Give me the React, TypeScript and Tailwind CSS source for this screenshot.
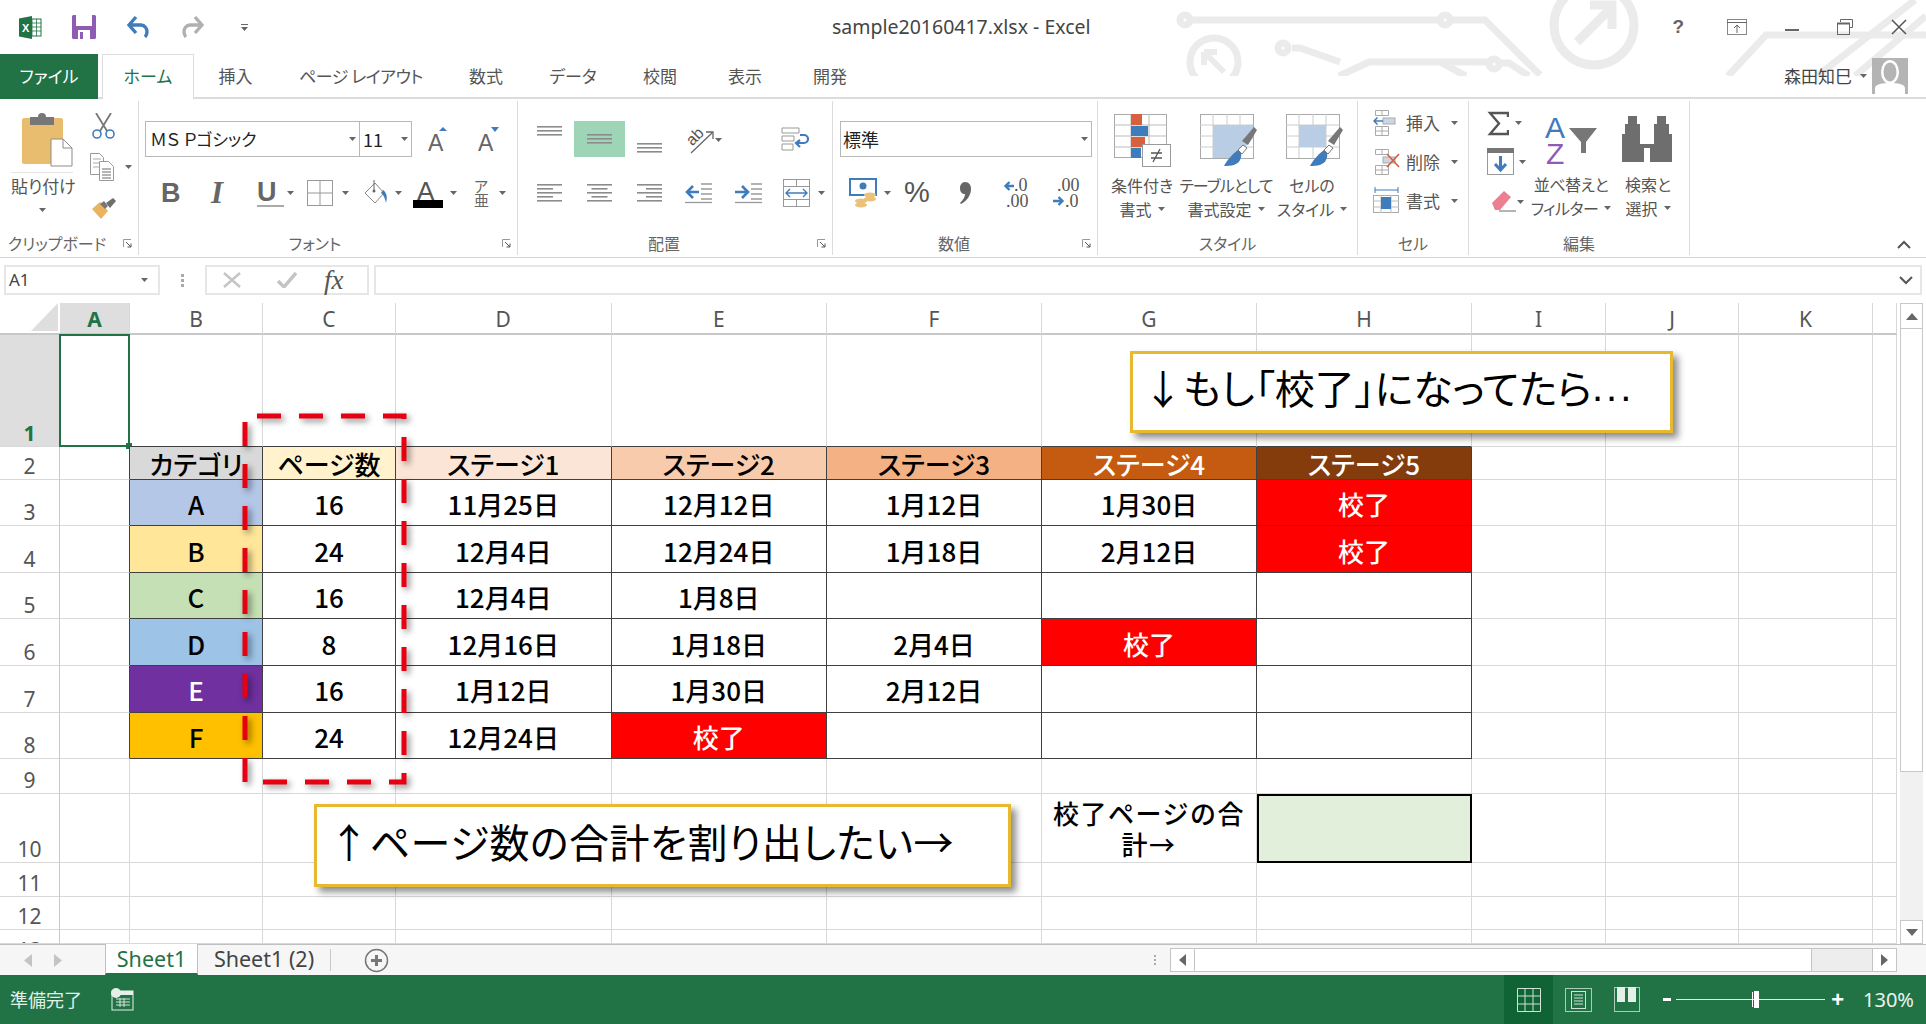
import type { ReactNode } from 'react'

const GRAY = '#6a6a6a'
const BLUE = '#3f7cbc'

function Caret() {
  return (
    <svg width="7" height="4" viewBox="0 0 7 4" className="shrink-0">
      <path d="M0 0h7L3.5 4z" fill="#666" />
    </svg>
  )
}

function Launcher() {
  return (
    <svg width="10" height="10" viewBox="0 0 10 10" className="absolute right-[5px] top-[8px]">
      <path d="M.5 8V.5H8" fill="none" stroke="#999" />
      <path d="M3 3l5 5M8 4.5V8H4.5" fill="none" stroke="#555" />
    </svg>
  )
}

function Lines({ rows, align = 'center' }: { rows: number[]; align?: 'left' | 'center' | 'right' }) {
  return (
    <svg width="25" height={rows.length * 4} viewBox={`0 0 25 ${rows.length * 4}`} className="shrink-0">
      {rows.map((w, i) => {
        const x = align === 'left' ? 0 : align === 'right' ? 25 - w : (25 - w) / 2
        return <rect key={i} x={x} y={i * 4 + 1} width={w} height="1.6" fill="#8c8c8c" />
      })}
    </svg>
  )
}

function Group({ width, label, launcher, labelClass = '', children }: { width: string; label: string; launcher?: boolean; labelClass?: string; children: ReactNode }) {
  return (
    <div className={`${width} relative my-[2px] flex shrink-0 flex-col border-r border-[#dcdcdc]`}>
      <div className="min-h-0 flex-1">{children}</div>
      <div className={`relative flex h-[24px] items-center justify-center text-[16px] leading-none text-[#666] ${labelClass}`}>
        {label}
        {launcher && <Launcher />}
      </div>
    </div>
  )
}

function ExcelIcon() {
  return (
    <svg width="23" height="23" viewBox="0 0 23 23">
      <rect x="9" y="3" width="13" height="17" fill="#fff" stroke="#217346" />
      <path d="M13 3v17M17.500 3v17M9 7h13M9 11h13M9 15h13" stroke="#217346" strokeWidth=".8" />
      <path d="M0 2.500L13 0v23L0 20.500z" fill="#217346" />
      <text x="3" y="16" fontSize="11" fontWeight="700" fill="#fff" fontFamily="Liberation Sans">X</text>
    </svg>
  )
}

function SaveIcon() {
  return (
    <svg width="24" height="24" viewBox="0 0 24 24">
      <path d="M0 1.500A1.500 1.500 0 0 1 1.500 0h21A1.500 1.500 0 0 1 24 1.500v21a1.500 1.500 0 0 1-1.500 1.500h-21A1.500 1.500 0 0 1 0 22.500z" fill="#8e5bb5" />
      <rect x="4" y="0" width="16" height="11" fill="#fff" />
      <rect x="6" y="15" width="12" height="9" fill="#fff" />
      <rect x="8" y="17" width="3" height="7" fill="#8e5bb5" />
    </svg>
  )
}

function UndoIcon({ color, flip }: { color: string; flip?: boolean }) {
  return (
    <svg width="24" height="24" viewBox="0 0 24 24" className={flip ? '-scale-x-100' : ''}>
      <path d="M3 10h11a6.500 6.500 0 0 1 6 7c0 2.500-1 4-2 5" fill="none" stroke={color} strokeWidth="3.400" />
      <path d="M9 2L2 10l7 8" fill="none" stroke={color} strokeWidth="3.400" />
    </svg>
  )
}

function PasteIcon() {
  return (
    <svg width="51" height="56" viewBox="0 0 51 56">
      <rect x="0" y="7" width="41" height="46" rx="2" fill="#e9bd6f" />
      <path d="M8 6h8a4 4 0 0 1 8 0h8v8H8z" fill="#777" />
      <path d="M29 28h12l9 9v18H29z" fill="#fff" stroke="#8c8c8c" />
      <path d="M41 28v9h9" fill="none" stroke="#8c8c8c" />
    </svg>
  )
}

function ScissorsIcon() {
  return (
    <svg width="23" height="26" viewBox="0 0 23 26">
      <path d="M4 0l11 18M19 0L8 18" stroke="#777" strokeWidth="1.800" fill="none" />
      <circle cx="5" cy="21" r="4" fill="none" stroke={BLUE} strokeWidth="1.600" />
      <circle cx="18" cy="21" r="4" fill="none" stroke={BLUE} strokeWidth="1.600" />
    </svg>
  )
}

function CopyIcon() {
  return (
    <svg width="24" height="28" viewBox="0 0 24 28">
      <path d="M.5.500h9l4 4v17H.5z" fill="#fff" stroke="#999" />
      <path d="M3 6h8M3 10h8M3 14h8" stroke="#aaa" />
      <path d="M9.500 8.500h9l5 5v14h-14z" fill="#fff" stroke="#999" />
      <path d="M12 16h9M12 19h9M12 22h9M12 25h9" stroke={GRAY} />
    </svg>
  )
}

function PainterIcon() {
  return (
    <svg width="25" height="22" viewBox="0 0 25 22">
      <path d="M1 11l8-7 8 9-7 8z" fill="#eab45f" />
      <path d="M9 6l4-3 4 5-3 3z" fill="#777" />
      <path d="M15 5l7-5 3 3-6 7z" fill="#6e6e6e" />
    </svg>
  )
}

function GrowIcon({ up }: { up: boolean }) {
  return (
    <svg width="22" height="28" viewBox="0 0 22 28">
      <text x="0" y="26" fontSize="23" fontFamily="Liberation Sans" fill="#666">A</text>
      <path d={up ? 'M11 6l4-4 4 4z' : 'M13 2h8l-4 5z'} fill={BLUE} />
    </svg>
  )
}

function BorderIcon() {
  return (
    <svg width="26" height="26" viewBox="0 0 26 26">
      <rect x=".5" y=".5" width="25" height="25" fill="none" stroke="#999" />
      <path d="M13 0v26M0 13h26" stroke="#999" />
    </svg>
  )
}

function BucketIcon() {
  return (
    <svg width="25" height="28" viewBox="0 0 25 28">
      <path d="M1 14L11 4l9 10-9 10z" fill="#fff" stroke="#888" />
      <path d="M10 1v11" stroke="#666" />
      <circle cx="10" cy="12" r="1.500" fill="#666" />
      <path d="M19 11c3 2 5 6 3 13-1-4-2-8-5-10z" fill={BLUE} />
    </svg>
  )
}

function FontColorIcon() {
  return (
    <svg width="30" height="29" viewBox="0 0 30 29">
      <text x="4" y="21" fontSize="26" fontFamily="Liberation Sans" fill="#555">A</text>
      <rect x="0" y="21" width="30" height="8" fill="#000" />
    </svg>
  )
}

function OrientIcon() {
  return (
    <svg width="28" height="28" viewBox="0 0 28 28">
      <text x="1" y="16" fontSize="16" transform="rotate(-45 9 12)" fontFamily="Liberation Sans" fill="#555">ab</text>
      <path d="M5 27L26 7M20 6h7v7" fill="none" stroke="#666" strokeWidth="1.300" />
    </svg>
  )
}

function WrapIcon() {
  return (
    <svg width="28" height="24" viewBox="0 0 28 24">
      <path d="M1 1h17v5H1zM1 9h12v5H1zM1 17h11v6H1z" fill="none" stroke="#999" />
      <path d="M19 8h4a3 3 0 0 1 0 8h-7m3-3l-4 3 4 4" fill="none" stroke={BLUE} strokeWidth="2.200" />
    </svg>
  )
}

function IndentIcon({ right }: { right?: boolean }) {
  return (
    <svg width="27" height="22" viewBox="0 0 27 22">
      <path d="M16 2h11M16 7h11M16 12h11M16 17h11" stroke="#9a9a9a" strokeWidth="1.300" />
      <path d="M0 20.500h27" stroke="#9a9a9a" strokeWidth="1.300" />
      {right ? (
        <path d="M0 10h11M7 4l6 6-6 6" fill="none" stroke={BLUE} strokeWidth="2.600" />
      ) : (
        <path d="M14 10H3M8 4l-6 6 6 6" fill="none" stroke={BLUE} strokeWidth="2.600" />
      )}
    </svg>
  )
}

function MergeIcon() {
  return (
    <svg width="27" height="28" viewBox="0 0 27 28">
      <rect x=".5" y=".5" width="26" height="27" fill="none" stroke="#999" />
      <path d="M0 7.500h27M0 20.500h27M13.500 0v7M13.500 21v7" stroke="#999" />
      <path d="M3 14h21M7 10l-4 4 4 4M20 10l4 4-4 4" fill="none" stroke={BLUE} strokeWidth="1.400" />
    </svg>
  )
}

function CurrencyIcon() {
  return (
    <svg width="28" height="30" viewBox="0 0 28 30">
      <rect x="1" y="1" width="26" height="16" fill="#fff" stroke={BLUE} strokeWidth="2" />
      <circle cx="14" cy="8" r="3.500" fill={BLUE} />
      <ellipse cx="21" cy="17" rx="6" ry="2.500" fill="#eac27a" />
      <ellipse cx="21" cy="21" rx="6" ry="2.500" fill="#eac27a" />
      <ellipse cx="12" cy="23" rx="6" ry="2.500" fill="#eac27a" />
      <ellipse cx="12" cy="27" rx="6" ry="2.500" fill="#eac27a" />
    </svg>
  )
}

function DecimalIcon({ more }: { more?: boolean }) {
  const top = more ? '.0' : '.00'
  const bottom = more ? '.00' : '.0'
  return (
    <svg width="28" height="30" viewBox="0 0 28 30">
      <text x={more ? 11 : 5} y="13" fontSize="18" fontFamily="Liberation Serif" fill="#555">{top}</text>
      <text x={more ? 3 : 13} y="29" fontSize="18" fontFamily="Liberation Serif" fill="#555">{bottom}</text>
      {more ? (
        <path d="M11 8H3m3.500-4L2.500 8l4 4" fill="none" stroke={BLUE} strokeWidth="2.400" />
      ) : (
        <path d="M1 23h9m-3.500-4l4 4-4 4" fill="none" stroke={BLUE} strokeWidth="2.400" />
      )}
    </svg>
  )
}

function CondIcon() {
  return (
    <svg width="57" height="53" viewBox="0 0 57 53">
      <rect x=".5" y=".5" width="52" height="43" fill="#fff" stroke="#aaa" />
      <path d="M17 0v44M35 0v44M0 11h53M0 22h53M0 33h53" stroke="#bbb" />
      <rect x="17" y="0" width="11" height="11" fill="#d8603c" />
      <rect x="17" y="12" width="17" height="10" fill={BLUE} />
      <rect x="17" y="23" width="14" height="10" fill="#d8603c" />
      <rect x="17" y="34" width="10" height="10" fill={BLUE} />
      <rect x="28.500" y="30.500" width="28" height="22" fill="#fff" stroke="#999" />
      <path d="M37 39h11M37 44h11M39 48l7-13" stroke="#555" strokeWidth="1.300" />
    </svg>
  )
}

function TableIcon({ compact }: { compact?: boolean }) {
  return (
    <svg width="58" height="53" viewBox="0 0 58 53" className="ml-[6px] shrink-0">
      <rect x=".5" y=".5" width="53" height="44" fill="#fff" stroke="#aaa" />
      <path d="M13 0v44M27 0v44M40 0v44M0 11h53M0 22h53M0 33h53" stroke="#ccc" />
      {compact ? (
        <rect x="13" y="11" width="27" height="22" fill="#b9cde4" />
      ) : (
        <path d="M13 11h40v13L36 44H13z" fill="#b9cde4" />
      )}
      <path d="M42 27l12-14 3 3-9 15z" fill="#777" />
      <path d="M24 52c3-5 6-10 14-16 4 2 4 6 2 10-2 5-9 6-16 6z" fill={BLUE} />
      <path d="M38 36l5-5 4 3-5 6z" fill="#fff" stroke="#777" />
    </svg>
  )
}

function CellIcon({ kind }: { kind: 'insert' | 'delete' | 'format' }) {
  return (
    <svg width="28" height="28" viewBox="0 0 28 28">
      {kind === 'format' ? (
        <>
          <path d="M2 3h23M2 0v6M25 0v6" stroke={BLUE} fill="none" />
          <rect x=".5" y="8.500" width="25" height="17" fill="#fff" stroke="#aaa" />
          <path d="M8 8v18M18 8v18M0 14h26M0 20h26" stroke="#bbb" />
          <rect x="8" y="10" width="10" height="12" fill={BLUE} />
        </>
      ) : (
        <>
          <path d="M2.500 1.500h13v5h-13zM2.500 17.500h13v9h-13zM9 1v5M9 18v9M2 22h14" fill="none" stroke="#aaa" />
          <rect x="10" y="9" width="12" height="6" fill="#c9d6e6" stroke="#aaa" />
          {kind === 'insert' ? (
            <path d="M10 12H1m3.500-3.500L1 12l3.500 3.500" fill="none" stroke={BLUE} strokeWidth="1.500" />
          ) : (
            <path d="M14 6l12 13M26 6L14 19" stroke="#d8603c" strokeWidth="1.700" />
          )}
        </>
      )}
    </svg>
  )
}

function EraserIcon() {
  return (
    <svg width="25" height="21" viewBox="0 0 25 21">
      <path d="M1 12L13 0l7 6L9 19H4z" fill="#ec7f90" />
      <path d="M8 20h17" stroke="#8c8c8c" strokeWidth="1.300" />
    </svg>
  )
}

function SortIcon() {
  return (
    <svg width="52" height="50" viewBox="0 0 52 50">
      <text x="0" y="23" fontSize="30" fontFamily="Liberation Sans" fill={BLUE}>A</text>
      <text x="1" y="49" fontSize="30" fontFamily="Liberation Sans" fill="#8e5bb5">Z</text>
      <path d="M24 13h28L41 27v11h-5V27z" fill="#777" />
    </svg>
  )
}

function BinocularsIcon() {
  return (
    <svg width="52" height="46" viewBox="0 0 52 46">
      <path d="M7 0h9v8h3v20h14V8h3V0h9v8h3v10h3v28H29V32h-6v14H1V18h3V8h3z" fill="#6e6e6e" transform="translate(-1 0)" />
      <path d="M21 19h10" stroke="#fff" strokeWidth="2" />
    </svg>
  )
}

// 背景の回路模様
function Circuit() {
  return (
    <svg width="776" height="76" viewBox="1150 0 776 76" className="absolute right-0 top-0" fill="none" stroke="#ebebeb" strokeWidth="7">
      <path d="M1190 20h250M1450 20h35l55 55" />
      <circle cx="1185" cy="20" r="5" />
      <circle cx="1445" cy="20" r="5" />
      <path d="M1292 48h8l40 14" />
      <circle cx="1283" cy="48" r="5" />
      <path d="M1339 76l30-14h118M1499 63h10l20 13M1440 62l26 14" />
      <circle cx="1494" cy="64" r="5" />
      <circle cx="1214" cy="62" r="24" />
      <path d="M1204 52l20 20M1204 52h13M1204 52v13" strokeWidth="6" />
      <circle cx="1594" cy="25" r="40" strokeWidth="9" />
      <path d="M1577 42l34-34M1590 5h22v24" strokeWidth="9" />
      <path d="M1728 76l38-41h160M1817 76l98-76M1855 76l71-60" />
    </svg>
  )
}

function TitleBar() {
  return (
    <div className="relative flex h-[54px] items-center">
      <Circuit />
      <div className="relative flex items-center pl-[19px]">
        <ExcelIcon />
        <div className="ml-[30px]"><SaveIcon /></div>
        <div className="ml-[31px]"><UndoIcon color={BLUE} /></div>
        <div className="ml-[29px]"><UndoIcon color="#b0b0b0" flip /></div>
        <div className="ml-[37px] flex flex-col items-center gap-[2px]">
          <div className="h-px w-[7px] bg-[#666]" />
          <Caret />
        </div>
      </div>
      <div className="absolute left-[832px] top-[15px] text-[19.5px] leading-[24px] text-[#444] [font-family:'Noto_Sans',sans-serif]">
        sample20160417.xlsx - Excel
      </div>
      <div className="relative ml-auto flex items-center pr-[19px] text-[#666]">
        <span className="text-[19px] font-bold [font-family:'Liberation_Sans',sans-serif]">?</span>
        <svg width="20" height="16" viewBox="0 0 20 16" className="ml-[43px]">
          <rect x=".5" y=".5" width="19" height="15" fill="none" stroke="#888" />
          <path d="M0 3.500h20M10 14V6M7 9l3-3 3 3" fill="none" stroke="#666" />
        </svg>
        <div className="ml-[38px] mt-[6px] h-[2px] w-[14px] bg-[#666]" />
        <svg width="16" height="16" viewBox="0 0 16 16" className="ml-[38px]">
          <path d="M3.500 3V.5h12v8H13" fill="none" stroke="#666" />
          <rect x=".5" y="4.500" width="12" height="11" fill="none" stroke="#666" />
          <path d="M0 4.500h13" stroke="#666" strokeWidth="2" />
        </svg>
        <svg width="16" height="16" viewBox="0 0 16 16" className="ml-[38px]">
          <path d="M1 1l14 14M15 1L1 15" stroke="#555" strokeWidth="1.500" />
        </svg>
      </div>
    </div>
  )
}

const TABS = [
  { label: 'ファイル', w: 'w-[98px]' },
  { label: 'ホーム', w: 'w-[92px] ml-[4px]' },
  { label: '挿入', w: 'w-[83px]' },
  { label: 'ページ レイアウト', w: 'w-[168px] tracking-[-0.5px]' },
  { label: '数式', w: 'w-[82px]' },
  { label: 'データ', w: 'w-[92px]' },
  { label: '校閲', w: 'w-[82px]' },
  { label: '表示', w: 'w-[88px]' },
  { label: '開発', w: 'w-[82px]' },
]

function TabRow() {
  return (
    <div className="relative flex h-[45px] items-stretch border-b-2 border-[#dcdcdc] text-[17px] text-[#555]">
      {TABS.map((t, i) => (
        <div
          key={t.label}
          className={`${t.w} -mb-[2px] flex items-center justify-center pb-[2px] ${
            i === 0 ? 'bg-[#217346] text-white' : i === 1 ? 'border-x border-t border-[#dcdcdc] bg-white text-[#217346]' : ''
          }`}
        >
          {t.label}
        </div>
      ))}
      <div className="ml-auto flex items-center pr-[18px]">
        <span className="text-[17px] text-[#444]">森田知巳</span>
        <div className="ml-[8px] mr-[5px]"><Caret /></div>
        <div className="flex h-[36px] w-[36px] items-end justify-center overflow-hidden bg-[#b4b4b4]">
          <svg width="36" height="36" viewBox="0 0 36 36">
            <ellipse cx="18" cy="14" rx="9" ry="12" fill="#fff" />
            <path d="M3 36v-6c0-4 8-5 15-5s15 1 15 5v6z" fill="#fff" />
            <ellipse cx="18" cy="14" rx="6.500" ry="9.500" fill="#b4b4b4" />
          </svg>
        </div>
      </div>
    </div>
  )
}

function Ribbon() {
  return (
    <div className="flex h-[159px] border-b border-[#d4d4d4] text-[#555]">
      {/* クリップボード */}
      <Group width="w-[139px]" label="クリップボード" launcher labelClass="pr-[24px]">
        <div className="flex pl-[11px] pt-[10px]">
          <div className="flex w-[62px] flex-col items-center">
            <div className="ml-[10px] h-[57px] w-[51px]"><PasteIcon /></div>
            <div className="mt-[4px] w-[62px] border-t border-[#e4e4e4] pt-[2px] text-center text-[17px] leading-[22px] whitespace-nowrap">貼り付け</div>
            <div className="mt-[11px]"><Caret /></div>
          </div>
          <div className="ml-[17px] flex flex-col">
            <div className="ml-[2px] mt-[2px]"><ScissorsIcon /></div>
            <div className="mt-[14px] flex items-center gap-[11px]"><CopyIcon /><Caret /></div>
            <div className="ml-[1px] mt-[17px]"><PainterIcon /></div>
          </div>
        </div>
      </Group>

      {/* フォント */}
      <Group width="w-[379px]" label="フォント" launcher labelClass="pr-[26px]">
        <div className="flex items-center pl-[6px] pt-[20px]">
          <div className="flex h-[36px] w-[215px] items-center justify-between border border-[#b8b8b8] pl-[4px] pr-[3px] text-[17px] text-[#222]">
            <span>ＭＳ Ｐゴシック</span><Caret />
          </div>
          <div className="flex h-[36px] w-[52px] items-center justify-between border border-l-0 border-[#b8b8b8] pl-[3px] pr-[3px] text-[18px] text-[#222]">
            <span>11</span><Caret />
          </div>
          <div className="ml-[16px]"><GrowIcon up /></div>
          <div className="ml-[28px]"><GrowIcon up={false} /></div>
        </div>
        <div className="mt-[21px] flex h-[30px] items-center pl-[22px] text-[#666]">
          <span className="w-[50px] text-[27px] font-bold [font-family:'Liberation_Sans',sans-serif]">B</span>
          <span className="w-[46px] text-[31px] font-bold italic [font-family:'Liberation_Serif',serif]">I</span>
          <span className="w-[27px] border-b-2 border-[#aaa] text-[27px] font-bold leading-[26px] [font-family:'Liberation_Sans',sans-serif]">U</span>
          <div className="ml-[3px] w-[20px]"><Caret /></div>
          <BorderIcon />
          <div className="ml-[9px] w-[22px]"><Caret /></div>
          <BucketIcon />
          <div className="ml-[6px] w-[18px]"><Caret /></div>
          <FontColorIcon />
          <div className="ml-[7px] w-[24px]"><Caret /></div>
          <div className="flex w-[25px] flex-col text-[15px] leading-[14px]">
            <span>ア</span><span>亜</span>
          </div>
          <Caret />
        </div>
      </Group>

      {/* 配置 */}
      <Group width="w-[315px]" label="配置" launcher labelClass="pr-[22px]">
        <div className="mt-[20px] flex h-[36px] items-start pl-[19px]">
          <div className="mt-[4px] w-[25px]"><Lines rows={[25, 25, 25]} /></div>
          <div className="ml-[12px] flex h-[36px] w-[51px] items-center justify-center bg-[#9fd5b7]"><Lines rows={[25, 25, 25]} /></div>
          <div className="ml-[12px] mt-[21px]"><Lines rows={[25, 25, 25]} /></div>
          <div className="ml-[24px] mt-[5px] flex items-center gap-[1px]"><OrientIcon /><Caret /></div>
          <div className="ml-[59px] mt-[6px]"><WrapIcon /></div>
        </div>
        <div className="mt-[21px] flex h-[30px] items-center pl-[19px]">
          <Lines rows={[25, 16, 25, 16, 25]} align="left" />
          <div className="ml-[25px]"><Lines rows={[25, 16, 25, 16, 25]} /></div>
          <div className="ml-[25px]"><Lines rows={[25, 16, 25, 16, 25]} align="right" /></div>
          <div className="ml-[23px]"><IndentIcon /></div>
          <div className="ml-[23px]"><IndentIcon right /></div>
          <div className="ml-[21px]"><MergeIcon /></div>
          <div className="ml-[8px]"><Caret /></div>
        </div>
      </Group>

      {/* 数値 */}
      <Group width="w-[265px]" label="数値" launcher labelClass="pr-[22px]">
        <div className="ml-[7px] mt-[20px] flex h-[36px] w-[252px] items-center justify-between border border-[#b8b8b8] pl-[2px] pr-[3px] text-[18px] text-[#222]">
          <span>標準</span><Caret />
        </div>
        <div className="mt-[21px] flex h-[30px] items-center pl-[16px]">
          <CurrencyIcon />
          <div className="ml-[7px]"><Caret /></div>
          <span className="ml-[13px] text-[29px] [font-family:'Liberation_Sans',sans-serif]">%</span>
          <svg width="11" height="22" viewBox="0 0 11 22" className="ml-[30px]">
            <path d="M5 0c4 0 6 3 6 7 0 6-4 12-10 15l-1-1c3-3 5-6 5-9-3 0-5-2-5-6 0-3 2-6 5-6z" fill="#666" />
          </svg>
          <div className="ml-[32px]"><DecimalIcon more /></div>
          <div className="ml-[21px]"><DecimalIcon /></div>
        </div>
      </Group>

      {/* スタイル */}
      <Group width="w-[260px]" label="スタイル">
        <div className="flex pt-[13px] text-[16px] leading-[24px]">
          <div className="flex w-[88px] shrink-0 flex-col items-center">
            <CondIcon />
            <div className="mt-[6px] whitespace-nowrap">条件付き</div>
            <div className="flex items-center gap-[6px] whitespace-nowrap">書式<Caret /></div>
          </div>
          <div className="flex w-[80px] shrink-0 flex-col items-center">
            <TableIcon />
            <div className="mt-[6px] whitespace-nowrap tracking-[-1px]">テーブルとして</div>
            <div className="flex items-center gap-[6px] whitespace-nowrap">書式設定<Caret /></div>
          </div>
          <div className="flex w-[92px] shrink-0 flex-col items-center">
            <TableIcon compact />
            <div className="mt-[6px] whitespace-nowrap">セルの</div>
            <div className="flex items-center gap-[6px] whitespace-nowrap">スタイル<Caret /></div>
          </div>
        </div>
      </Group>

      {/* セル */}
      <Group width="w-[111px]" label="セル">
        <div className="flex flex-col gap-[11px] pl-[15px] pt-[8px] text-[17px]">
          {(['insert', 'delete', 'format'] as const).map((k, i) => (
            <div key={k} className="flex h-[28px] items-center">
              <CellIcon kind={k} />
              <span className="ml-[5px] w-[40px]">{['挿入', '削除', '書式'][i]}</span>
              <div className="ml-[5px]"><Caret /></div>
            </div>
          ))}
        </div>
      </Group>

      {/* 編集 */}
      <Group width="w-[221px]" label="編集">
        <div className="flex pl-[18px] pt-[9px] text-[16px] leading-[24px]">
          <div className="flex w-[42px] shrink-0 flex-col">
            <div className="flex h-[26px] items-center gap-[6px]">
              <svg width="22" height="25" viewBox="0 0 22 25" className="shrink-0">
                <path d="M21 6V2H3l9 10.500L3 23h18v-4" fill="none" stroke="#555" strokeWidth="2.400" />
              </svg>
              <Caret />
            </div>
            <div className="mt-[12px] flex items-center gap-[5px]">
              <svg width="27" height="27" viewBox="0 0 27 27">
                <rect x=".5" y=".5" width="26" height="26" fill="#fff" stroke="#999" />
                <rect x="0" y="0" width="27" height="5" fill="#777" />
                <path d="M13.500 8v14M8 16l5.500 6 5.500-6" fill="none" stroke={BLUE} strokeWidth="3" />
              </svg>
              <Caret />
            </div>
            <div className="ml-[4px] mt-[16px] flex items-center gap-[1px]"><EraserIcon /><Caret /></div>
          </div>
          <div className="-ml-[2px] flex w-[88px] shrink-0 flex-col items-center">
            <div className="mt-[5px]"><SortIcon /></div>
            <div className="mt-[7px] whitespace-nowrap tracking-[-0.5px]">並べ替えと</div>
            <div className="flex items-center gap-[6px] whitespace-nowrap tracking-[-0.5px]">フィルター<Caret /></div>
          </div>
          <div className="ml-[3px] flex w-[60px] shrink-0 flex-col items-center">
            <div className="mt-[6px]"><BinocularsIcon /></div>
            <div className="mt-[10px] whitespace-nowrap">検索と</div>
            <div className="flex items-center gap-[6px] whitespace-nowrap">選択<Caret /></div>
          </div>
        </div>
      </Group>

      <div className="flex flex-1 items-end justify-end pb-[8px] pr-[15px]">
        <svg width="14" height="9" viewBox="0 0 14 9">
          <path d="M1 8l6-6 6 6" fill="none" stroke="#555" strokeWidth="2" />
        </svg>
      </div>
    </div>
  )
}

function FormulaBar() {
  return (
    <div className="flex h-[45px] items-start gap-0 pl-[4px] pr-[4px] pt-[7px]">
      <div className="flex h-[30px] w-[156px] items-center justify-between border-2 border-[#e6e6e6] pl-[3px] pr-[10px] text-[17px] text-[#444] [font-family:'Noto_Sans',sans-serif]">
        <span>A1</span><Caret />
      </div>
      <div className="flex h-[30px] w-[45px] flex-col items-center justify-center gap-[2px]">
        <div className="h-[3px] w-[3px] bg-[#aaa]" />
        <div className="h-[3px] w-[3px] bg-[#aaa]" />
        <div className="h-[3px] w-[3px] bg-[#aaa]" />
      </div>
      <div className="flex h-[30px] w-[164px] items-center border-2 border-[#e6e6e6]">
        <svg width="18" height="16" viewBox="0 0 18 16" className="ml-[16px]">
          <path d="M1 1l16 14M17 1L1 15" stroke="#c4c4c4" strokeWidth="2.500" />
        </svg>
        <svg width="20" height="16" viewBox="0 0 20 16" className="ml-[36px]">
          <path d="M1 9l6 6L19 1" fill="none" stroke="#c4c4c4" strokeWidth="3.500" />
        </svg>
        <span className="ml-[27px] text-[27px] italic leading-none text-[#555] [font-family:'Liberation_Serif',serif]">fx</span>
      </div>
      <div className="ml-[5px] flex h-[30px] flex-1 items-center justify-end border-2 border-[#e6e6e6] pr-[7px]">
        <svg width="14" height="9" viewBox="0 0 14 9">
          <path d="M1 1l6 6 6-6" fill="none" stroke="#555" strokeWidth="2" />
        </svg>
      </div>
    </div>
  )
}

const COLS = ['A', 'B', 'C', 'D', 'E', 'F', 'G', 'H', 'I', 'J', 'K', '']
const R = '校了'

type Cell = { t?: string; bg?: string; white?: boolean }

const TABLE: Cell[][] = [
  [{ t: 'カテゴリ', bg: 'bg-[#d9d9d9]' }, { t: 'ページ数', bg: 'bg-[#fff2cc]' }, { t: 'ステージ1', bg: 'bg-[#fbe5d6]' }, { t: 'ステージ2', bg: 'bg-[#f8cbad]' }, { t: 'ステージ3', bg: 'bg-[#f4b183]' }, { t: 'ステージ4', bg: 'bg-[#c55a11]', white: true }, { t: 'ステージ5', bg: 'bg-[#843c0c]', white: true }],
  [{ t: 'A', bg: 'bg-[#b4c7e7]' }, { t: '16' }, { t: '11月25日' }, { t: '12月12日' }, { t: '1月12日' }, { t: '1月30日' }, { t: R, bg: 'bg-[#ff0000]', white: true }],
  [{ t: 'B', bg: 'bg-[#ffe699]' }, { t: '24' }, { t: '12月4日' }, { t: '12月24日' }, { t: '1月18日' }, { t: '2月12日' }, { t: R, bg: 'bg-[#ff0000]', white: true }],
  [{ t: 'C', bg: 'bg-[#c5e0b4]' }, { t: '16' }, { t: '12月4日' }, { t: '1月8日' }, {}, {}, {}],
  [{ t: 'D', bg: 'bg-[#9dc3e6]' }, { t: '8' }, { t: '12月16日' }, { t: '1月18日' }, { t: '2月4日' }, { t: R, bg: 'bg-[#ff0000]', white: true }, {}],
  [{ t: 'E', bg: 'bg-[#7030a0]', white: true }, { t: '16' }, { t: '1月12日' }, { t: '1月30日' }, { t: '2月12日' }, {}, {}],
  [{ t: 'F', bg: 'bg-[#ffc000]' }, { t: '24' }, { t: '12月24日' }, { t: R, bg: 'bg-[#ff0000]', white: true }, {}, {}, {}],
]

function Sheet() {
  const rowNums = [1, 2, 3, 4, 5, 6, 7, 8, 9, 10, 11, 12, 13]
  return (
    <div className="relative grid h-[641px] w-[1897px] grid-cols-[60px_70px_133px_133px_215.5px_215.5px_215px_215px_215px_134px_133px_134px_24px] grid-rows-[32px_112px_32.7px_46.6px_46.6px_46.6px_46.6px_46.7px_46.6px_34.7px_68.7px_34.3px_33px_14px] overflow-hidden">
      {/* 列見出し */}
      <div className="flex items-end justify-end border-b-2 border-[#c8c8c8] pb-[2px] pr-[2px]">
        <svg width="27" height="28" viewBox="0 0 27 28"><path d="M27 0v28H0z" fill="#dedede" /></svg>
      </div>
      {COLS.map((c, i) => (
        <div
          key={c + i}
          className={`flex items-center justify-center border-b-2 border-r border-b-[#c8c8c8] border-r-[#d8d8d8] pt-[3px] text-[21px] [font-family:'Noto_Sans',sans-serif] ${
            i === 0 ? 'bg-[#dedede] font-bold text-[#217346]' : 'text-[#555]'
          }`}
        >
          {c}
        </div>
      ))}

      {rowNums.map((n) => (
        <Row key={n} n={n} />
      ))}

      {/* 説明の吹き出し */}
      <Callout className="left-[1130px] top-[48px] h-[82px] w-[543px] items-start pl-[10px] pt-[9px]">↓もし「校了」になってたら<span className="tracking-[3px] [font-family:'Liberation_Sans',sans-serif]">...</span></Callout>
      <Callout className="left-[314px] top-[501px] h-[83px] w-[697px] items-start pl-[12px] pt-[10px] tracking-[0.5px]">↑ページ数の合計を割り出したい→</Callout>

      {/* 赤い破線 */}
      <svg width="180" height="390" viewBox="0 0 180 390" className="absolute left-[235px] top-[105px] drop-shadow-[3px_3px_3px_rgba(0,0,0,0.45)]">
        <path d="M22 8h147v366H10V8h12" fill="none" stroke="#e60012" strokeWidth="5" strokeDasharray="24 18" />
      </svg>
    </div>
  )
}

function Callout({ className, children }: { className: string; children: ReactNode }) {
  return (
    <div className={`absolute flex whitespace-nowrap border-[3px] border-[#e6b92f] bg-white text-[40px] leading-[48px] text-black shadow-[5px_5px_7px_rgba(0,0,0,0.45)] ${className}`}>
      {children}
    </div>
  )
}

function Row({ n }: { n: number }) {
  const inTable = n >= 2 && n <= 8
  return (
    <>
      <div className={`flex items-start justify-center overflow-hidden border-b border-r border-b-[#d8d8d8] border-r-[#c8c8c8] ${n === 1 ? 'bg-[#dedede]' : ''}`}>
        <div className={`flex w-full items-end justify-center text-[21px] leading-[28px] [font-family:'Noto_Sans',sans-serif] ${
          n === 1 ? 'h-full font-bold text-[#217346]' : n === 13 ? 'h-[33px] text-[#555]' : 'h-full text-[#555]'
        }`}>
          <span className="-mb-[1px]">{n}</span>
        </div>
      </div>
      {COLS.map((_, c) => {
        const col = c - 1
        const cell = inTable && col >= 0 && col < 7 ? TABLE[n - 2][col] : undefined
        const inCol = col >= 0 && col < 7
        const dark = inTable && (inCol || c === 0)
        const darkBottom = (inTable && inCol) || (n === 1 && inCol)
        const selected = n === 1 && c === 0
        const total = n === 10 && c === 7
        const label = n === 10 && c === 6
        const lines = total
          ? 'border-2 border-black bg-[#e2efda]'
          : `border-b border-r ${dark ? 'border-r-[#404040]' : 'border-r-[#d8d8d8]'} ${darkBottom ? 'border-b-[#404040]' : 'border-b-[#d8d8d8]'}`
        return (
          <div
            key={c}
            className={`relative flex items-center justify-center text-center text-[26px] font-medium ${lines} ${cell?.bg ?? ''} ${cell?.white ? 'text-white' : 'text-black'}`}
          >
            {cell?.t && <span className="mt-[3px] leading-[28px]">{cell.t}</span>}
            {label && (
              <span className="leading-[31px] tracking-[1.5px] [font-feature-settings:normal]">
                校了ページの合
                <br />
                計→
              </span>
            )}
            {selected && (
              <div className="absolute -inset-px border-2 border-[#217346]">
                <div className="absolute -bottom-[4px] -right-[4px] h-[6px] w-[6px] bg-[#217346]" />
              </div>
            )}
          </div>
        )
      })}
    </>
  )
}

function VScroll() {
  return (
    <div className="ml-[3px] mr-[3px] flex h-[641px] flex-1 flex-col bg-[#f1f1f1]">
      <div className="flex h-[26px] items-center justify-center border border-[#c8c8c8] bg-white">
        <svg width="12" height="7" viewBox="0 0 12 7"><path d="M0 7h12L6 0z" fill="#666" /></svg>
      </div>
      <div className="h-[443px] border-x border-b border-[#c8c8c8] bg-white" />
      <div className="mt-auto flex h-[24px] items-center justify-center border border-[#c8c8c8] bg-white">
        <svg width="12" height="7" viewBox="0 0 12 7"><path d="M0 0h12L6 7z" fill="#666" /></svg>
      </div>
    </div>
  )
}

function SheetTabs() {
  return (
    <div className="flex h-[31px] items-stretch border-t border-[#c0c0c0] bg-[#f6f6f6] text-[21.5px] leading-[28px] [font-family:'Noto_Sans',sans-serif]">
      <div className="flex w-[105px] items-center pl-[24px]">
        <svg width="8" height="13" viewBox="0 0 8 13"><path d="M8 0v13L0 6.500z" fill="#c4c4c4" /></svg>
        <svg width="8" height="13" viewBox="0 0 8 13" className="ml-[22px]"><path d="M0 0v13l8-6.500z" fill="#c4c4c4" /></svg>
      </div>
      <div className="-mt-px flex w-[93px] items-center justify-center border-x border-b-2 border-x-[#c0c0c0] border-b-[#217346] bg-white text-[#217346]">Sheet1</div>
      <div className="flex w-[132px] items-center justify-center pb-[2px] text-[#444]">Sheet1 (2)</div>
      <div className="my-[4px] w-px bg-[#c8c8c8]" />
      <div className="ml-[33px] flex items-center">
        <svg width="25" height="25" viewBox="0 0 25 25">
          <circle cx="12.500" cy="12.500" r="11" fill="none" stroke="#777" strokeWidth="1.500" />
          <path d="M12.500 7v11M7 12.500h11" stroke="#777" strokeWidth="3" />
        </svg>
      </div>
      <div className="ml-auto flex items-center pr-[29px]">
        <div className="mr-[14px] flex flex-col gap-[2px]">
          <div className="h-[2px] w-[2px] bg-[#aaa]" /><div className="h-[2px] w-[2px] bg-[#aaa]" /><div className="h-[2px] w-[2px] bg-[#aaa]" />
        </div>
        <div className="flex h-[24px] w-[727px] items-stretch border border-[#c4c4c4] bg-[#ededed]">
          <div className="flex w-[24px] items-center justify-center border-r border-[#c4c4c4] bg-white">
            <svg width="7" height="12" viewBox="0 0 7 12"><path d="M7 0v12L0 6z" fill="#666" /></svg>
          </div>
          <div className="w-[617px] border-r border-[#c4c4c4] bg-white" />
          <div className="ml-auto flex w-[24px] items-center justify-center border-l border-[#c4c4c4] bg-white">
            <svg width="7" height="12" viewBox="0 0 7 12"><path d="M0 0v12l7-6z" fill="#666" /></svg>
          </div>
        </div>
      </div>
    </div>
  )
}

function StatusBar() {
  return (
    <div className="flex h-[49px] items-stretch bg-[#217346] text-white">
      <div className="flex items-center pl-[10px] text-[18px] text-[#e4efe8]">準備完了</div>
      <div className="ml-[29px] flex items-center">
        <svg width="23" height="23" viewBox="0 0 23 23">
          <rect x="1" y="3" width="21" height="19" fill="none" stroke="#e4efe8" />
          <rect x="9" y="3" width="13" height="4" fill="#e4efe8" />
          <circle cx="5" cy="5" r="5" fill="#e4efe8" />
          <path d="M5 11h14M5 14h14M5 17h14M9 10v9M13 10v9" stroke="#e4efe8" strokeWidth=".9" />
        </svg>
      </div>
      <div className="ml-auto flex items-stretch pr-[12px]">
        <div className="flex w-[49px] items-center justify-center bg-[#0f6335]">
          <svg width="24" height="24" viewBox="0 0 24 24">
            <path d="M.5.500h23v23H.5zM8 0v24M16 0v24M0 8h24M0 16h24" fill="none" stroke="#cfe3d7" />
          </svg>
        </div>
        <div className="ml-[12px] flex items-center">
          <svg width="27" height="24" viewBox="0 0 27 24">
            <rect x=".5" y=".5" width="26" height="23" fill="none" stroke="#a9cdb8" />
            <rect x="6.500" y="3.500" width="14" height="17" fill="none" stroke="#cfe3d7" />
            <path d="M9 7h9M9 10h9M9 13h9M9 16h9" stroke="#cfe3d7" />
          </svg>
        </div>
        <div className="ml-[22px] flex items-center">
          <svg width="26" height="25" viewBox="0 0 26 25">
            <rect x=".5" y=".5" width="25" height="24" fill="none" stroke="#a9cdb8" />
            <path d="M3 0h8v15H3zM14 0h8v15h-8z" fill="#e4efe8" />
          </svg>
        </div>
        <div className="ml-[23px] flex items-center">
          <div className="h-[3px] w-[8px] bg-white" />
          <div className="relative ml-[5px] h-px w-[149px] bg-[#e4efe8]">
            <div className="absolute left-[76px] top-[-7px] h-[15px] w-px bg-white" />
            <div className="absolute left-[78px] top-[-8px] h-[17px] w-[5px] bg-white" />
          </div>
          <span className="ml-[6px] text-[22px] font-bold leading-none [font-family:'Liberation_Sans',sans-serif]">+</span>
          <span className="ml-[19px] text-[20px] text-[#eaf3ee] [font-family:'Noto_Sans',sans-serif]">130%</span>
        </div>
      </div>
    </div>
  )
}

export default function App() {
  return (
    <div className="flex h-[1024px] w-[1926px] flex-col overflow-hidden bg-white [font-family:'Noto_Sans_CJK_JP',sans-serif] [font-feature-settings:'palt']">
      <TitleBar />
      <TabRow />
      <Ribbon />
      <FormulaBar />
      <div className="flex">
        <Sheet />
        <VScroll />
      </div>
      <SheetTabs />
      <StatusBar />
    </div>
  )
}
